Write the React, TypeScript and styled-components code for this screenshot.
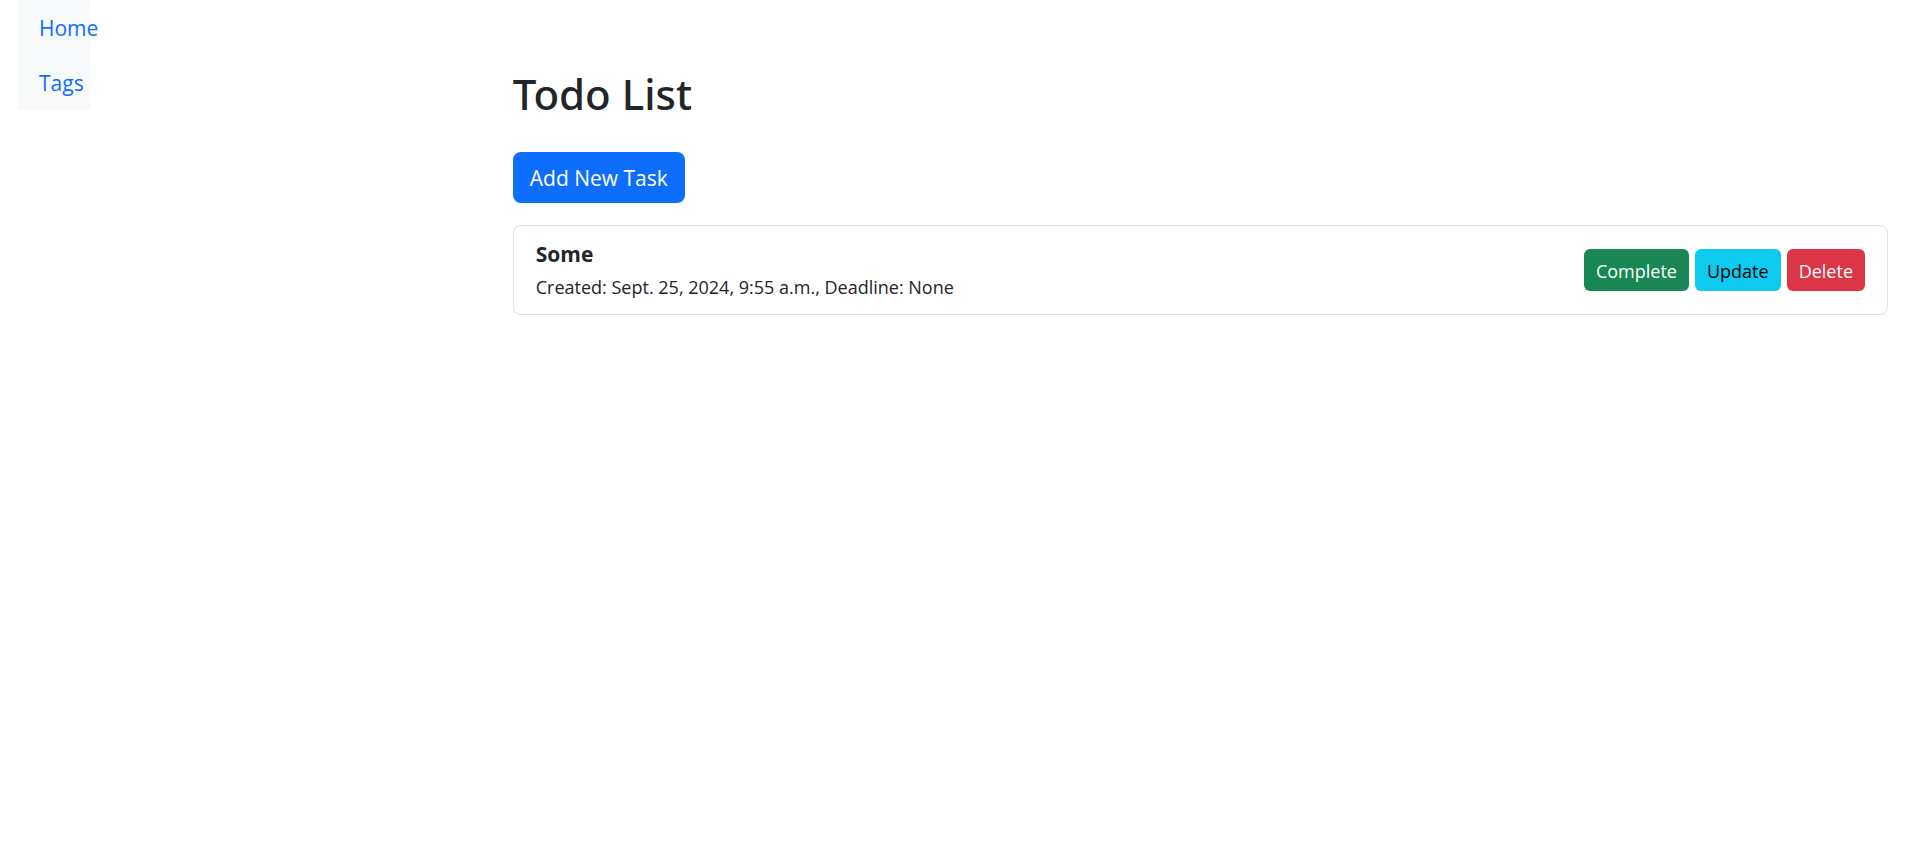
import React from "react";
import styled, { createGlobalStyle } from "styled-components";

const GlobalStyle = createGlobalStyle`
  *, *::before, *::after { box-sizing: border-box; }
  body {
    margin: 0;
    background: #fff;
    color: #212529;
    font-family: "Segoe UI", "Open Sans", "Noto Sans", sans-serif;
    font-size: 21px;
    line-height: 33px;
  }
`;

const Page = styled.div`
  display: grid;
  grid-template-columns: minmax(0, 1fr) minmax(0, 3fr);
  align-items: start;
`;

const Sidebar = styled.nav`
  width: 74px;
  margin-left: 17px;
  background: #f8f9fa;
`;

const NavList = styled.ul`
  margin: 0;
  padding: 0;
  list-style: none;
`;

const NavLink = styled.a`
  display: block;
  padding: 12px 22px 10px;
  color: #0d6efd;
  text-decoration: none;
`;

const Main = styled.main`
  padding: 67px 31px 0 33px;
`;

const Title = styled.h1`
  margin: 0 0 32px;
  font-family: "Segoe UI", "Noto Sans", "Open Sans", sans-serif;
  font-size: 42px;
  line-height: 53px;
  font-weight: 500;
`;

type Tone = "primary" | "success" | "info" | "danger";

const tones: Record<Tone, { background: string; text: string }> = {
  primary: { background: "#0d6efd", text: "#fff" },
  success: { background: "#198754", text: "#fff" },
  info: { background: "#0dcaf0", text: "#000" },
  danger: { background: "#dc3545", text: "#fff" },
};

const Button = styled.button<{ $tone: Tone; $small?: boolean }>`
  padding: ${(p) => (p.$small ? "8px 12px 6px" : "10px 17px 8px")};
  border: 0;
  border-radius: ${(p) => (p.$small ? "6px" : "8px")};
  background: ${(p) => tones[p.$tone].background};
  color: ${(p) => tones[p.$tone].text};
  font-family: inherit;
  font-size: ${(p) => (p.$small ? "18px" : "21px")};
  line-height: ${(p) => (p.$small ? "28px" : "33px")};
  white-space: nowrap;
  cursor: pointer;
`;

const TaskList = styled.ul`
  margin: 22px 0 0;
  padding: 0;
  border: 1px solid #dee2e6;
  border-radius: 8px;
  list-style: none;
`;

const Task = styled.li`
  display: flex;
  align-items: center;
  justify-content: space-between;
  gap: 22px;
  padding: 11px 22px;

  & + & {
    border-top: 1px solid #dee2e6;
  }
`;

const TaskName = styled.strong`
  display: block;
  font-weight: 700;
  line-height: 35px;
`;

const TaskMeta = styled.small`
  display: block;
  font-size: 18px;
  line-height: 31px;
`;

const Actions = styled.div`
  display: flex;
  gap: 6px;
`;

export default function App() {
  return (
    <>
      <GlobalStyle />
      <Page>
        <Sidebar>
          <NavList>
            <li><NavLink href="#home">Home</NavLink></li>
            <li><NavLink href="#tags">Tags</NavLink></li>
          </NavList>
        </Sidebar>
        <Main>
          <Title>Todo List</Title>
          <Button type="button" $tone="primary">Add New Task</Button>
          <TaskList>
            <Task>
              <div>
                <TaskName>Some</TaskName>
                <TaskMeta>Created: Sept. 25, 2024, 9:55 a.m., Deadline: None</TaskMeta>
              </div>
              <Actions>
                <Button type="button" $tone="success" $small>Complete</Button>
                <Button type="button" $tone="info" $small>Update</Button>
                <Button type="button" $tone="danger" $small>Delete</Button>
              </Actions>
            </Task>
          </TaskList>
        </Main>
      </Page>
    </>
  );
}
